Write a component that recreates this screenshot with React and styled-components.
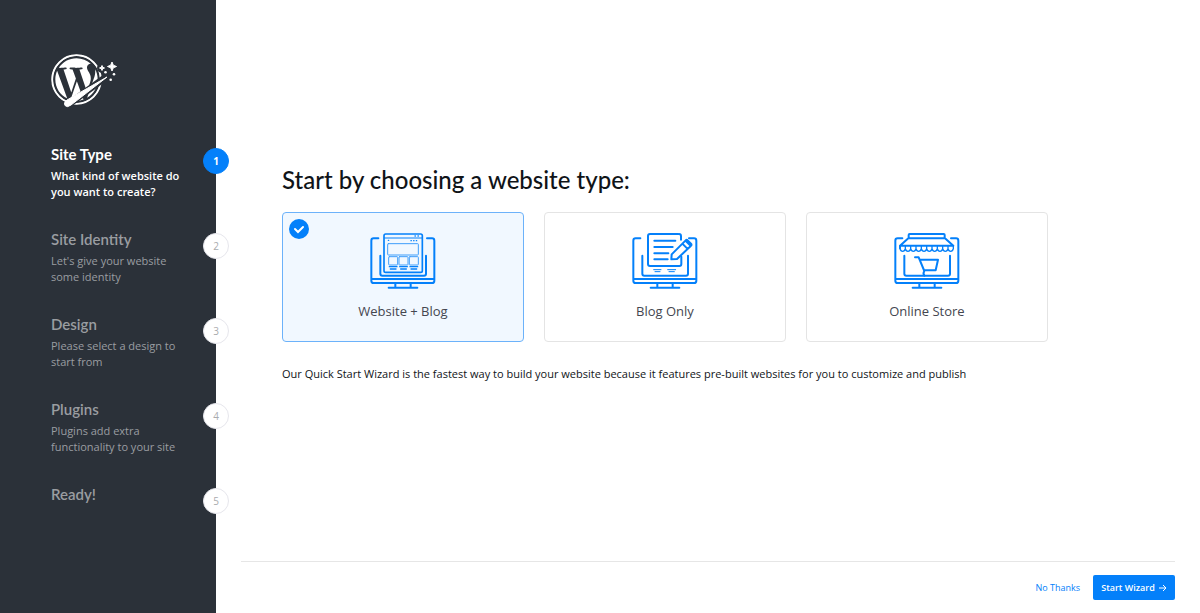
import React, { useState } from 'react';
import styled, { createGlobalStyle, css } from 'styled-components';
import { FaWordpress } from 'react-icons/fa';

const BLUE = '#0480fa';

const GlobalStyle = createGlobalStyle`
  * {
    box-sizing: border-box;
  }

  body {
    margin: 0;
    background: #fff;
    color: #101418;
    font-family: "Open Sans", "Noto Sans", sans-serif;
  }
`;

const Page = styled.div`
  display: flex;
  min-height: 100vh;
`;

const SideBar = styled.aside`
  flex: 0 0 216px;
  padding: 52px 0 24px 51px;
  background: #2b3139;
`;

const Logo = styled.svg`
  display: block;
  width: 68px;
  height: 56px;
  margin-bottom: 36px;
`;

const Steps = styled.ol`
  margin: 0;
  padding: 0;
  list-style: none;
`;

const Step = styled.li`
  position: relative;
  min-height: 85px;
  padding-right: 36px;
  color: ${({ $active }) => ($active ? '#fff' : '#9a9da1')};
`;

const StepTitle = styled.h2`
  margin: 0 0 4px;
  font-family: Lato, sans-serif;
  font-size: 15px;
  font-weight: ${({ $active }) => ($active ? 700 : 600)};
  line-height: 20px;
`;

const StepText = styled.p`
  margin: 0;
  font-size: 11px;
  font-weight: ${({ $active }) => ($active ? 600 : 500)};
  line-height: 16px;
`;

const StepNumber = styled.span`
  position: absolute;
  top: 4px;
  right: -13px;
  display: flex;
  align-items: center;
  justify-content: center;
  width: 26px;
  height: 26px;
  border: 1px solid #e6e6ec;
  border-radius: 50%;
  background: #fff;
  color: #a9abae;
  font-size: 10px;

  ${({ $active }) => $active && css`
    border-color: ${BLUE};
    background: ${BLUE};
    color: #fff;
    font-weight: 700;
  `}
`;

const Main = styled.main`
  flex: 1;
  display: flex;
  flex-direction: column;
  min-width: 0;
  padding: 0 25px;
`;

const Content = styled.form`
  flex: 1;
  display: flex;
  flex-direction: column;
  justify-content: center;
  width: 82%;
  margin-left: 41px;
  padding-bottom: 16px;
`;

const Heading = styled.h1`
  margin: 0 0 16px;
  font-family: Lato, sans-serif;
  font-size: 24px;
  font-weight: 500;
  line-height: 32px;
`;

const Cards = styled.div`
  display: grid;
  grid-template-columns: repeat(3, 1fr);
  gap: 20px;
`;

const Card = styled.label`
  position: relative;
  display: flex;
  flex-direction: column;
  align-items: center;
  padding: 20px 16px;
  border: 1px solid ${({ $selected }) => ($selected ? '#6cb2fa' : '#e4e4e4')};
  border-radius: 4px;
  background: ${({ $selected }) => ($selected ? '#f1f8ff' : '#fff')};
  color: #44464f;
  font-size: 13px;
  line-height: 20px;
  cursor: pointer;
`;

const CardRadio = styled.input`
  position: absolute;
  opacity: 0;
`;

const CardCheck = styled.svg`
  position: absolute;
  top: 6px;
  left: 6px;
  width: 20px;
  height: 20px;
`;

const CardIcon = styled.svg`
  width: 66px;
  height: 57px;
  margin-bottom: 11px;
  fill: none;
  stroke: ${BLUE};
  stroke-width: 6;
  stroke-linecap: round;
  stroke-linejoin: round;
`;

const Note = styled.p`
  margin: 24px 0 0;
  font-size: 11px;
  font-weight: 500;
  line-height: 16px;
`;

const Footer = styled.footer`
  display: flex;
  align-items: center;
  justify-content: flex-end;
  gap: 13px;
  height: 52px;
  border-top: 1px solid #e6e6e6;
`;

const SkipLink = styled.a`
  color: ${BLUE};
  font-size: 9px;
  text-decoration: none;
`;

const StartButton = styled.button`
  display: flex;
  align-items: center;
  justify-content: center;
  gap: 4px;
  width: 82px;
  height: 25px;
  padding: 0;
  border: 0;
  border-radius: 2px;
  background: ${BLUE};
  color: #fff;
  font-family: inherit;
  font-size: 9px;
  font-weight: 600;
`;

const Arrow = styled.svg`
  width: 8px;
  height: 8px;
  fill: none;
  stroke: currentColor;
`;

const Monitor = () => (
  <>
    <path d="M55 40H41q-7 0-7 7v120q0 7 7 7h175q7 0 7-7V47q0-7-7-7h-15M34 162h189" />
    <path d="M61 92v54q0 6 6 6h125q6 0 6-6V92M106 176v11M152 176v11M86 188h86" />
  </>
);

const WebsiteIcon = () => (
  <>
    <Monitor />
    <rect x="72" y="27" width="115" height="115" rx="5" strokeWidth="5" />
    <path d="M73 39h113" strokeWidth="3" />
    <path d="M165 33h1M174 33h1M85 46h1M153 47h1M161 47h1M169 47h1" strokeWidth="4" />
    <g strokeWidth="3" opacity="0.75">
      <rect x="83" y="56" width="92" height="34" rx="2" />
      <rect x="86" y="95" width="27" height="25" rx="2" />
      <rect x="117" y="95" width="27" height="25" rx="2" />
      <rect x="148" y="95" width="27" height="25" rx="2" />
    </g>
    <path d="M88 125h23M119 125h23M150 125h23M91 132h17M122 132h17M153 132h17" strokeWidth="4" />
  </>
);

const BlogIcon = () => (
  <>
    <Monitor />
    <path d="M168 27H84q-6 0-6 6v84q0 6 6 6h88q6 0 6-6V95M171 27q6 0 6 7v10" />
    <path d="M97 47h63M97 66h55M97 85h42M97 103h40" />
    <path d="M149 88l42-42q3-3 6 0l10 10q3 3 0 6l-42 40-17 1zM181 56l15 15M190 47l15 15" />
    <path d="M95 134h22M137 134h24M99 140h15M141 140h16" strokeWidth="3" />
  </>
);

const StoreIcon = () => (
  <>
    <Monitor />
    <path d="M74 39v-9q0-3 3-3h102q3 0 3 3v9M73 40L48 62h160L183 40zM48 62v8" />
    <path d="M48 62v9q2 8 8 8t8-8q2 8 8 8t8-8q2 8 8 8t8-8q2 8 8 8t8-8q2 8 8 8t8-8q2 8 8 8t8-8q2 8 8 8t8-8q2 8 8 8t8-8q2 8 8 8t8-8q2 8 8 8t8-8v-9M64 64v7M80 64v7M96 64v7M112 64v7M128 64v7M144 64v7M160 64v7M176 64v7M192 64v7" strokeWidth="4" />
    <path d="M93 97h11l17 41M107 104h55l-7 32h-34M121 138q-5 7 0 14" />
  </>
);

const steps = [
  { title: 'Site Type', text: 'What kind of website do you want to create?' },
  { title: 'Site Identity', text: "Let's give your website some identity" },
  { title: 'Design', text: 'Please select a design to start from' },
  { title: 'Plugins', text: 'Plugins add extra functionality to your site' },
  { title: 'Ready!' },
];

const types = [
  { id: 'website', label: 'Website + Blog', Icon: WebsiteIcon },
  { id: 'blog', label: 'Blog Only', Icon: BlogIcon },
  { id: 'store', label: 'Online Store', Icon: StoreIcon },
];

function App() {
  const [selected, setSelected] = useState('website');

  return (
    <Page>
      <GlobalStyle />
      <SideBar>
        <Logo viewBox="0 0 68 56" aria-hidden="true">
          <FaWordpress x="0" y="2" size={51} color="#fff" />
          <circle cx="25.5" cy="27.5" r="24.3" fill="none" stroke="#fff" strokeWidth="1.8" />
          <path d="M18 52L55 25" stroke="#2b3139" strokeWidth="7" />
          <circle cx="51" cy="16" r="5" fill="#2b3139" />
          <path d="M56 25L16 48q-4 3-2 5.500t6-.5z" fill="#fff" stroke="#fff" strokeLinejoin="round" />
          <path
            d="M61 10l1.300 3.200 3.200 1.300-3.200 1.300-1.300 3.200-1.300-3.200-3.200-1.300 3.200-1.300zM51 13.500l.7 1.800 1.800.7-1.800.7-.7 1.800-.7-1.800-1.800-.7 1.800-.7z"
            fill="#fff"
            stroke="#fff"
          />
          <g fill="#fff">
            <circle cx="63" cy="22.300" r="1.300" />
            <circle cx="54.500" cy="20.300" r="1.300" />
            <circle cx="59.700" cy="27.700" r="1.300" />
          </g>
        </Logo>
        <Steps>
          {steps.map(({ title, text }, i) => (
            <Step key={title} $active={i === 0}>
              <StepTitle $active={i === 0}>{title}</StepTitle>
              {text && <StepText $active={i === 0}>{text}</StepText>}
              <StepNumber $active={i === 0}>{i + 1}</StepNumber>
            </Step>
          ))}
        </Steps>
      </SideBar>
      <Main>
        <Content>
          <Heading>Start by choosing a website type:</Heading>
          <Cards>
            {types.map(({ id, label, Icon }) => (
              <Card key={id} $selected={selected === id}>
                <CardRadio
                  type="radio"
                  name="type"
                  checked={selected === id}
                  onChange={() => setSelected(id)}
                />
                {selected === id && (
                  <CardCheck viewBox="0 0 20 20">
                    <circle cx="10" cy="10" r="10" fill={BLUE} />
                    <path d="M6 10l3 3 5-5" fill="none" stroke="#fff" strokeWidth="2" strokeLinecap="round" />
                  </CardCheck>
                )}
                <CardIcon viewBox="30 24 198 171"><Icon /></CardIcon>
                {label}
              </Card>
            ))}
          </Cards>
          <Note>
            Our Quick Start Wizard is the fastest way to build your website because it features
            pre-built websites for you to customize and publish
          </Note>
        </Content>
        <Footer>
          <SkipLink href="#skip">No Thanks</SkipLink>
          <StartButton type="button">
            Start Wizard
            <Arrow viewBox="0 0 8 8">
              <path d="M0 4h7M4 1l3 3-3 3" />
            </Arrow>
          </StartButton>
        </Footer>
      </Main>
    </Page>
  );
}

export default App;
